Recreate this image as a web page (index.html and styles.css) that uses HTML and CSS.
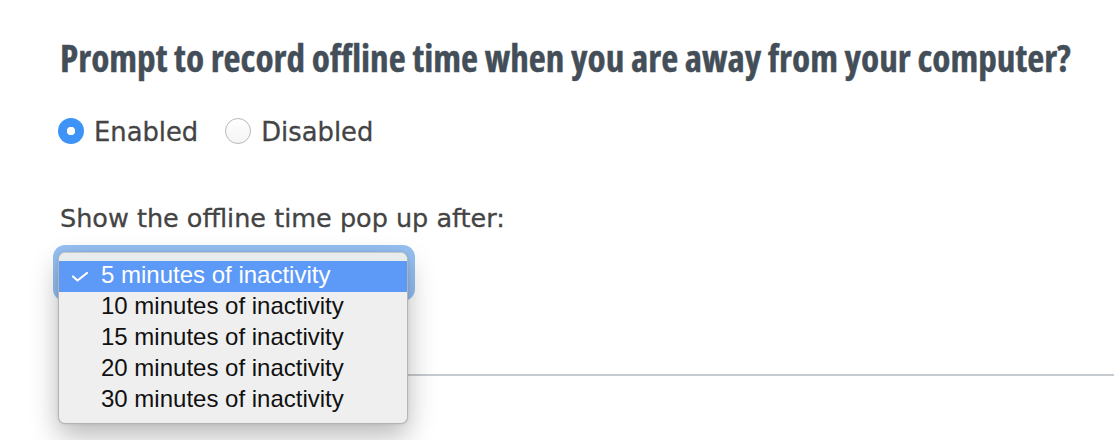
FILE: index.html
```html
<!DOCTYPE html>
<html>
<head>
<meta charset="utf-8">
<link rel="stylesheet" href="styles.css">
</head>
<body>
<div class="page">
  <h1 class="title">Prompt to record offline time when you are away from your computer?</h1>
  <div class="radios">
    <label class="radio"><span class="dot dot-on"></span>Enabled</label>
    <label class="radio"><span class="dot"></span>Disabled</label>
  </div>
  <p class="label">Show the offline time pop up after:</p>
  <div class="select-area">
    <div class="select-ring"></div>
    <ul class="menu">
      <li class="item item-on"><svg class="check" width="16" height="10" viewBox="0 0 16 10"><polyline points="1,4.5 5.5,8.5 15,1" fill="none" stroke="#fff" stroke-width="2.2" stroke-linecap="round" stroke-linejoin="round"/></svg>5 minutes of inactivity</li>
      <li class="item">10 minutes of inactivity</li>
      <li class="item">15 minutes of inactivity</li>
      <li class="item">20 minutes of inactivity</li>
      <li class="item">30 minutes of inactivity</li>
    </ul>
  </div>
  <div class="divider"></div>
</div>
</body>
</html>
```

FILE: styles.css
```css
html, body {
  margin: 0;
  padding: 0;
  background: #ffffff;
}

.page {
  box-sizing: border-box;
  min-height: 440px;
  padding: 36px 0 0 60px;
}

.title {
  margin: 0;
  font-family: "Open Sans", sans-serif;
  font-weight: 700;
  font-stretch: 75%;
  font-size: 37.2px;
  line-height: 44px;
  color: #434e58;
  -webkit-text-stroke: 0.4px #434e58;
  white-space: nowrap;
}

.radios {
  display: flex;
  align-items: center;
  gap: 29px;
  margin-top: 37px;
}

.radio {
  display: flex;
  align-items: center;
  gap: 10px;
  font-family: "DejaVu Sans", sans-serif;
  font-size: 25.8px;
  line-height: 30px;
  color: #444444;
  -webkit-text-stroke: 0.3px #444444;
}

.dot {
  box-sizing: border-box;
  width: 26px;
  height: 26px;
  margin: -3px 0 0 -2px;
  border-radius: 50%;
  border: 1px solid #b9b9b9;
  background: linear-gradient(#ffffff, #f4f4f4);
}

.dot-on {
  border: none;
  background: radial-gradient(circle, #ffffff 0 4px, #3d94f6 4.5px);
}

.label {
  margin: 56px 0 0 0;
  font-family: "DejaVu Sans", sans-serif;
  font-size: 25.5px;
  line-height: 30px;
  color: #444444;
  -webkit-text-stroke: 0.3px #444444;
}

.select-area {
  position: relative;
  margin: 12px 0 0 -7px;
  width: 362px;
  height: 56px;
}

.select-ring {
  width: 362px;
  height: 56px;
  border-radius: 12px;
  background: #95c0f2;
}

.menu {
  position: absolute;
  top: 7px;
  left: 5px;
  box-sizing: border-box;
  width: 350px;
  margin: 0;
  padding: 8px 0 7px 0;
  list-style: none;
  background: #efefef;
  border: 1px solid #b4b4b4;
  border-top-color: #c8c8c8;
  border-radius: 7px;
  box-shadow: 0 12px 28px rgba(0, 0, 0, 0.28), 0 0 3px rgba(0, 0, 0, 0.1);
  z-index: 2;
}

.menu::before {
  content: "";
  position: absolute;
  left: 0;
  right: 0;
  top: 0;
  height: 8px;
  background: #e9eced;
  border-radius: 7px 7px 0 0;
}

.item {
  position: relative;
  height: 31px;
  box-sizing: border-box;
  padding: 0 0 4px 42px;
  font-family: "Liberation Sans", Arial, sans-serif;
  font-size: 24px;
  line-height: 27px;
  color: #111111;
}

.item-on {
  background: #5d99f6;
  color: #ffffff;
}

.check {
  position: absolute;
  left: 13px;
  top: 11px;
}

.divider {
  margin-top: 73px;
  height: 2px;
  background: #c6cbd0;
}
```
